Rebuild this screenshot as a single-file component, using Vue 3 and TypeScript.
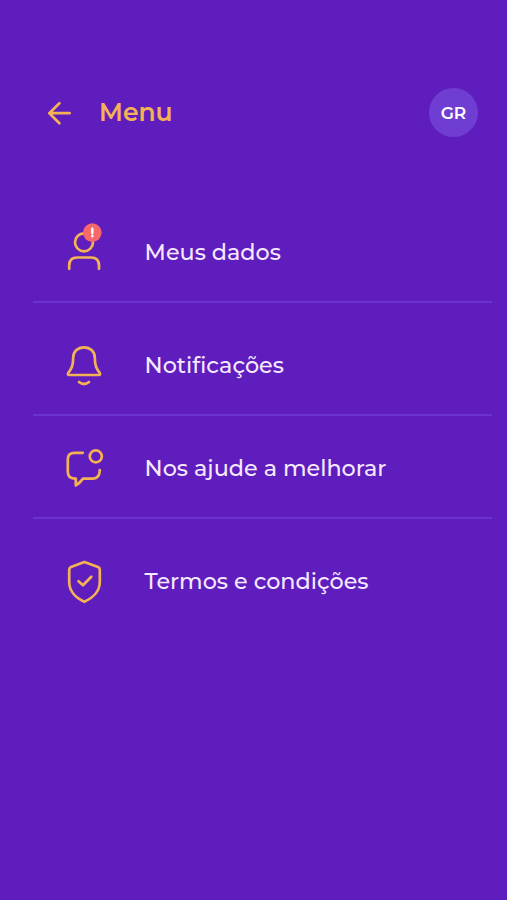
<script setup lang="ts">
type IconName = 'user' | 'bell' | 'feedback' | 'shield'

interface MenuItem {
  icon: IconName
  label: string
}

const items: MenuItem[] = [
  { icon: 'user', label: 'Meus dados' },
  { icon: 'bell', label: 'Notificações' },
  { icon: 'feedback', label: 'Nos ajude a melhorar' },
  { icon: 'shield', label: 'Termos e condições' },
]
</script>

<template>
  <main class="screen">
    <header class="header">
      <svg class="back" viewBox="0 0 26 26" aria-hidden="true">
        <path d="M22.6 13.2H2.3M12.4 3.2 2.3 13.2 12.4 23.3" />
      </svg>
      <h1 class="title">Menu</h1>
      <div class="avatar">GR</div>
    </header>

    <nav class="list">
      <a v-for="item in items" :key="item.icon" class="row" :class="item.icon">
        <svg class="icon" viewBox="0 0 60 60" aria-hidden="true">
          <g v-if="item.icon === 'user'">
            <circle cx="29" cy="20.3" r="9" />
            <path d="M14.2 46.8V43.5Q14.2 35.5 22.2 35.5H36Q44 35.5 44 43.5V46.8" />
            <circle class="badge" cx="37.3" cy="10.6" r="9.3" />
            <path class="mark" d="M37.3 6.8V11M37.3 13.8V14.2" />
          </g>
          <g v-else-if="item.icon === 'bell'">
            <path d="M29 12.3C22.5 12.3 18.2 16.8 18.2 22.5C18.2 31 16.2 34.2 13.2 38Q12.2 40 14.2 40H43.8Q45.8 40 44.8 38C41.8 34.2 39.8 31 39.8 22.5C39.8 16.8 35.5 12.3 29 12.3Z" />
            <path d="M24 47Q29 51 34 47" />
          </g>
          <g v-else-if="item.icon === 'feedback'">
            <path d="M27.8 14.8H19.5Q12.8 14.8 12.8 21.5V33.5Q12.8 40.4 19.5 40.6H20.8V47.4Q25 44.8 28 40.6H38Q44.8 40.4 44.8 32" />
            <circle cx="40.8" cy="18.4" r="6" />
          </g>
          <g v-else>
            <path d="M29.4 11 43 16Q44.8 16.8 44.8 18.8V31C44.8 40 37.8 47 29.4 50.8C21 47 14.2 40 14.2 31V18.8Q14.2 16.8 16 16Z" />
            <path d="M23.5 30.2 28 34.3 36.3 25.8" />
          </g>
        </svg>
        <span class="label">{{ item.label }}</span>
      </a>
    </nav>
  </main>
</template>

<style>
body {
  background: #5f1dbe;
}
</style>

<style scoped>
.screen {
  box-sizing: border-box;
  min-height: 900px;
  padding-top: 88px;
  background: #5f1dbe;
  color: #f6e9ff;
  font-family: Montserrat, Inter, sans-serif;
}

.header {
  display: flex;
  align-items: center;
  height: 49px;
  padding: 0 29px 0 47px;
}

.back {
  width: 26px;
  height: 26px;
  margin-right: 26px;
}

.back path,
.icon {
  fill: none;
  stroke: #f3b254;
  stroke-width: 2.7;
  stroke-linecap: round;
  stroke-linejoin: round;
}

.title {
  margin: 0;
  padding-bottom: 2px;
  color: #f3b254;
  font-size: 25px;
  font-weight: 600;
  line-height: 32px;
}

.avatar {
  display: grid;
  place-items: center;
  width: 49px;
  height: 49px;
  margin-left: auto;
  border-radius: 50%;
  background: #703dd2;
  color: #fff;
  font-size: 17px;
  font-weight: 600;
}

.list {
  display: flex;
  flex-direction: column;
  margin: 65px 15px 0 33px;
}

.row {
  display: flex;
  align-items: center;
  padding: 20px 0 19px 22px;
  border-bottom: 2px solid #6b35cd;
}

.bell {
  padding-top: 32px;
}

.feedback {
  padding-top: 22px;
}

.shield {
  padding-top: 32px;
  border-bottom: 0;
}

.icon {
  flex: none;
  width: 60px;
  height: 60px;
  margin-right: 29.6px;
}

.icon .badge {
  fill: #f5686b;
  stroke: none;
}

.icon .mark {
  stroke: #fff;
  stroke-width: 2.4;
}

.label {
  font-size: 22.3px;
  font-weight: 500;
  line-height: 28px;
  white-space: nowrap;
}
</style>
